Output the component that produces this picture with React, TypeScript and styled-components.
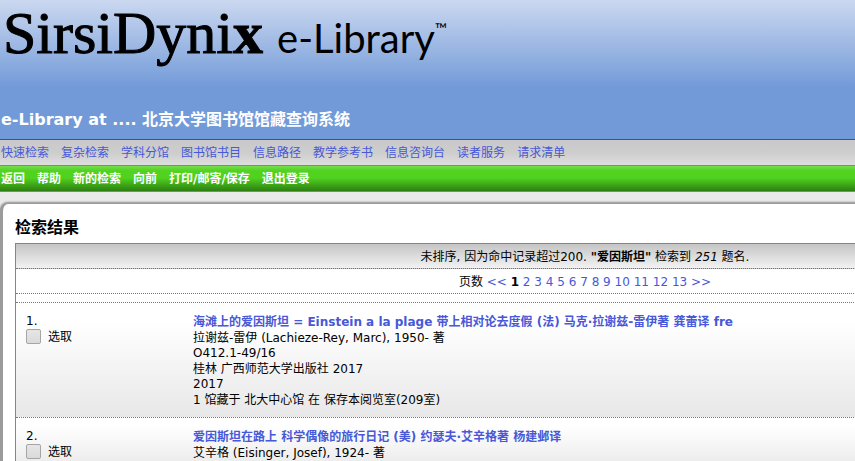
import React from "react";
import styled, { createGlobalStyle } from "styled-components";

const GlobalStyle = createGlobalStyle`
  body {
    margin: 0;
    background: #eaeaea;
    color: #000;
    font-family: Verdana, "DejaVu Sans", "Noto Sans CJK SC", sans-serif;
    font-size: 12px;
    line-height: 16px;
  }
`;

const Page = styled.div`
  min-height: 100vh;
  overflow: hidden;
  display: flex;
  flex-direction: column;
`;

const Header = styled.header`
  display: flex;
  flex-direction: column;
  gap: 37px;
  padding: 0 1px 7px 1px;
  border-bottom: 1px solid #37558d;
  background: linear-gradient(#cbd8f0 0, #729ad8 88px);
`;

const Logo = styled.div`
  display: flex;
  align-items: baseline;
  gap: 14px;
  padding-left: 2px;
  color: #000;
  line-height: 66px;
  white-space: nowrap;
`;

const Brand = styled.span`
  font-family: "Liberation Serif", serif;
  font-size: 60px;
  -webkit-text-stroke: 1px #000;
`;

const Product = styled.span`
  font-family: Lato, sans-serif;
  font-size: 40px;
  font-weight: 400;
`;

const Mark = styled.sup`
  font-size: 16px;
  line-height: 12px;
  vertical-align: 18px;
`;

const SiteTitle = styled.h1`
  margin: 0;
  color: #fff;
  font-size: 16px;
  line-height: 24px;
`;

const Bar = styled.nav<{ $tone: "grey" | "green" }>`
  display: flex;
  flex-wrap: wrap;
  gap: 12px;
  padding: 2px 1px 0;
  line-height: 23px;
  border-bottom: 1px solid #858585;
  font-weight: ${(p) => (p.$tone === "green" ? 700 : 400)};
  background: ${(p) =>
    p.$tone === "green"
      ? "linear-gradient(#76dc4c 0, #50d21f 5px, #50d21f 12px, #2d7e12 100%)"
      : "linear-gradient(#c9c9c9 0, #cdcdcd 50%, #dedede 100%)"};
`;

const BarLink = styled.a<{ $color: string }>`
  color: ${(p) => p.$color};
  text-decoration: none;
`;

const Panel = styled.main`
  flex: 1;
  min-width: 1140px;
  margin-top: 11px;
  padding: 12px 12px 0 12px;
  border: 3px solid #9b9b9b;
  border-top-width: 1px;
  border-bottom: 0;
  border-radius: 8px 8px 0 0;
  background: #fff;
  box-shadow: 0 -1px 2px #8c8c8c;
`;

const Heading = styled.h2`
  margin: 0 0 4px;
  font-size: 16px;
  line-height: 23px;
`;

const Results = styled.section`
  border: 1px solid #858585;
  border-bottom: 0;
`;

const Strip = styled.div<{ $shaded?: boolean }>`
  padding-top: 2px;
  border-bottom: 1px dotted #777;
  text-align: center;
  line-height: 22px;
  background: ${(p) => (p.$shaded ? "linear-gradient(#c5c5c5, #f2f2f2)" : "#fff")};
`;

const Spacer = styled.div`
  height: 8px;
  border-bottom: 1px dotted #777;
`;

const PageLink = styled.a`
  color: #4758d8;
  text-decoration: none;
`;

const Record = styled.article`
  display: grid;
  grid-template-columns: 167px 1fr;
  padding: 11px 10px 9px;
  border-bottom: 1px dotted #777;
  background: linear-gradient(#fff 15%, #e8e8e8);
`;

const Picker = styled.label`
  display: flex;
  align-items: flex-start;
  gap: 7px;
`;

const Check = styled.input`
  appearance: none;
  box-sizing: border-box;
  width: 15px;
  height: 15px;
  margin: 0;
  border: 1px solid #a5a5a5;
  border-radius: 2px;
  background: linear-gradient(#e6e6e6, #dadada);
  &:checked {
    background: #4758d8;
  }
`;

const Line = styled.div<{ $latin?: boolean }>`
  line-height: ${(p) => (p.$latin ? 15 : 16)}px;
`;

const TitleLink = styled(PageLink)`
  font-weight: 700;
`;

const subjects = ["快速检索", "复杂检索", "学科分馆", "图书馆书目", "信息路径", "教学参考书", "信息咨询台", "读者服务", "请求清单"];
const actions = ["返回", "帮助", "新的检索", "向前", "打印/邮寄/保存", "退出登录"];
const pages = Array.from({ length: 12 }, (_, i) => i + 2);

const records = [
  {
    title: "海滩上的爱因斯坦 = Einstein a la plage 带上相对论去度假 (法) 马克·拉谢兹-雷伊著 龚蕾译 fre",
    lines: [
      { text: "拉谢兹-雷伊 (Lachieze-Rey, Marc), 1950- 著" },
      { text: "O412.1-49/16", latin: true },
      { text: "桂林 广西师范大学出版社 2017" },
      { text: "2017", latin: true },
      { text: "1 馆藏于 北大中心馆 在 保存本阅览室(209室)" },
    ],
  },
  {
    title: "爱因斯坦在路上 科学偶像的旅行日记 (美) 约瑟夫·艾辛格著 杨建邺译",
    lines: [{ text: "艾辛格 (Eisinger, Josef), 1924- 著" }],
  },
];

export default function App() {
  return (
    <Page lang="zh-CN">
      <GlobalStyle />
      <Header>
        <Logo>
          <Brand>SirsiDyni<b>x</b></Brand>
          <Product>e-Library<Mark>™</Mark></Product>
        </Logo>
        <SiteTitle>e-Library at .... 北京大学图书馆馆藏查询系统</SiteTitle>
      </Header>
      <Bar $tone="grey">
        {subjects.map((s) => <BarLink key={s} href="#" $color="#4758d8">{s}</BarLink>)}
      </Bar>
      <Bar $tone="green">
        {actions.map((s) => <BarLink key={s} href="#" $color="#fff">{s}</BarLink>)}
      </Bar>
      <Panel>
        <Heading>检索结果</Heading>
        <Results>
          <Strip $shaded>
            未排序, 因为命中记录超过200. <b>"爱因斯坦"</b> 检索到 <em>251</em> 题名.
          </Strip>
          <Strip>
            页数 <PageLink href="#">&lt;&lt;</PageLink> <b>1</b>{" "}
            {pages.map((n) => (
              <React.Fragment key={n}><PageLink href="#">{n}</PageLink>{" "}</React.Fragment>
            ))}
            <PageLink href="#">&gt;&gt;</PageLink>
          </Strip>
          <Spacer />
          {records.map((r, i) => (
            <Record key={r.title}>
              <div>
                <Line $latin>{i + 1}.</Line>
                <Picker><Check type="checkbox" />选取</Picker>
              </div>
              <div>
                <Line><TitleLink href="#">{r.title}</TitleLink></Line>
                {r.lines.map((l) => <Line key={l.text} $latin={l.latin}>{l.text}</Line>)}
              </div>
            </Record>
          ))}
        </Results>
      </Panel>
    </Page>
  );
}
